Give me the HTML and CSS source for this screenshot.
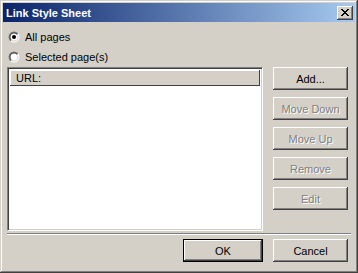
FILE: index.html
```html
<!DOCTYPE html>
<html>
<head>
    <meta charset="utf-8">
    <title>Link Style Sheet</title>
    <link rel="stylesheet" href="styles.css">
</head>
<body>
    <div class="window">
        <div class="titlebar">
            <span class="title">Link Style Sheet</span>
            <div class="close">
                <svg width="8" height="7" viewBox="0 0 8 7">
                    <path d="M0 0h2v1h1v1h2v-1h1v-1h2v1h-1v1h-1v1h-1v1h1v1h1v1h1v1h-2v-1h-1v-1h-2v1h-1v1h-2v-1h1v-1h1v-1h1v-1h-1v-1h-1v-1h-1z" fill="#000"/>
                </svg>
            </div>
        </div>
        <div class="content">
            <div class="radios">
                <label class="radio">
                    <svg width="12" height="12" viewBox="0 0 12 12">
                        <defs>
                            <linearGradient id="g1" x1="0" y1="0" x2="1" y2="1">
                                <stop offset="0.5" stop-color="#808080"/>
                                <stop offset="0.5" stop-color="#ffffff"/>
                            </linearGradient>
                            <linearGradient id="g2" x1="0" y1="0" x2="1" y2="1">
                                <stop offset="0.5" stop-color="#404040"/>
                                <stop offset="0.5" stop-color="#d4d0c8"/>
                            </linearGradient>
                        </defs>
                        <circle cx="6" cy="6" r="5.5" fill="url(#g1)"/>
                        <circle cx="6" cy="6" r="4.5" fill="url(#g2)"/>
                        <circle cx="6" cy="6" r="3.5" fill="#fff"/>
                        <circle cx="6" cy="6" r="2" fill="#000"/>
                    </svg>
                    <span>All pages</span>
                </label>
                <label class="radio">
                    <svg width="12" height="12" viewBox="0 0 12 12">
                        <circle cx="6" cy="6" r="5.5" fill="url(#g1)"/>
                        <circle cx="6" cy="6" r="4.5" fill="url(#g2)"/>
                        <circle cx="6" cy="6" r="3.5" fill="#fff"/>
                    </svg>
                    <span>Selected page(s)</span>
                </label>
            </div>
            <div class="main">
                <div class="list">
                    <div class="list-head">URL:</div>
                </div>
                <div class="side">
                    <div class="btn">Add...</div>
                    <div class="btn disabled">Move Down</div>
                    <div class="btn disabled">Move Up</div>
                    <div class="btn disabled">Remove</div>
                    <div class="btn disabled">Edit</div>
                </div>
            </div>
            <div class="sep"></div>
            <div class="footer">
                <div class="btn default">OK</div>
                <div class="btn">Cancel</div>
            </div>
        </div>
    </div>
</body>
</html>
```

FILE: styles.css
```css
body {
    margin: 0;
    font-family: "Liberation Sans", Arial, sans-serif;
    font-size: 11px;
    color: #000;
}
.window {
    width: 358px;
    height: 273px;
    box-sizing: border-box;
    background-color: #d4d0c8;
    padding: 3px;
    box-shadow: inset -1px -1px 0 #404040, inset 1px 1px 0 #d4d0c8, inset -2px -2px 0 #808080, inset 2px 2px 0 #ffffff;
}
.titlebar {
    height: 19px;
    display: flex;
    align-items: center;
    justify-content: space-between;
    padding: 0 2px 0 3px;
    background: linear-gradient(to right, #0a246a, #a6caf0);
    color: #fff;
}
.title {
    font-weight: bold;
    font-size: 11px;
}
.close {
    width: 16px;
    height: 14px;
    box-sizing: border-box;
    background-color: #d4d0c8;
    display: flex;
    align-items: center;
    justify-content: center;
    box-shadow: inset -1px -1px 0 #404040, inset 1px 1px 0 #ffffff, inset -2px -2px 0 #808080;
}
.content {
    padding: 5px 4px 0 4px;
}
.radio {
    height: 20px;
    display: flex;
    align-items: center;
    padding-left: 1px;
}
.radio svg {
    margin-right: 5px;
}
.main {
    display: flex;
    gap: 10px;
}
.list {
    width: 256px;
    height: 164px;
    box-sizing: border-box;
    background-color: #fff;
    border-top: 1px solid #808080;
    border-left: 1px solid #808080;
    border-right: 1px solid #fff;
    border-bottom: 1px solid #fff;
    box-shadow: inset 1px 1px 0 #404040, inset -1px -1px 0 #d4d0c8;
    padding: 2px;
}
.list-head {
    height: 16px;
    line-height: 16px;
    padding-left: 6px;
    background-color: #d4d0c8;
    box-shadow: inset -1px -1px 0 #404040, inset 1px 1px 0 #ffffff;
}
.side {
    display: flex;
    flex-direction: column;
    gap: 7px;
}
.btn {
    width: 75px;
    height: 23px;
    box-sizing: border-box;
    display: flex;
    align-items: center;
    justify-content: center;
    background-color: #d4d0c8;
    box-shadow: inset -1px -1px 0 #404040, inset 1px 1px 0 #ffffff, inset -2px -2px 0 #808080;
}
.disabled {
    color: #808080;
    text-shadow: 1px 1px 0 #ffffff;
}
.sep {
    height: 0;
    margin-top: 2px;
    border-top: 1px solid #808080;
    border-bottom: 1px solid #ffffff;
}
.footer {
    display: flex;
    justify-content: flex-end;
    gap: 10px;
    margin-top: 4px;
    padding-right: 3px;
}
.default {
    width: 80px;
    border: 1px solid #000;
}
```
